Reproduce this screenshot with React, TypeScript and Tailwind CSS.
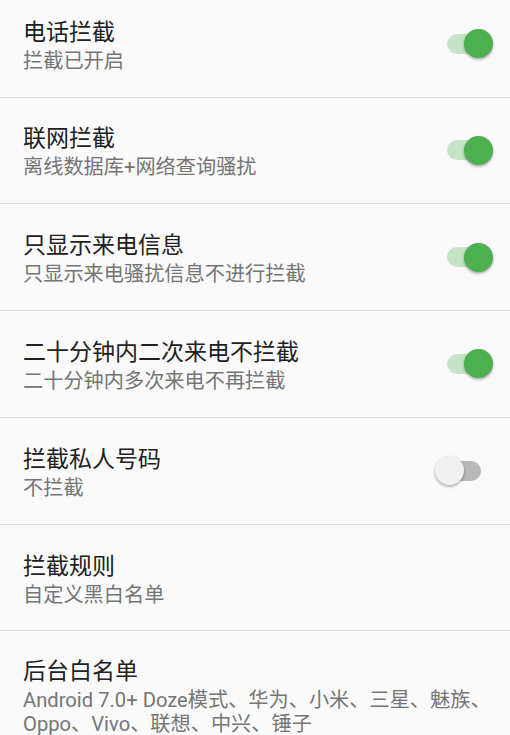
import React from "react";

type Item = { title: string; sub: React.ReactNode; toggle?: boolean };

const items: Item[] = [
  { title: "电话拦截", sub: "拦截已开启", toggle: true },
  { title: "联网拦截", sub: "离线数据库+网络查询骚扰", toggle: true },
  { title: "只显示来电信息", sub: "只显示来电骚扰信息不进行拦截", toggle: true },
  { title: "二十分钟内二次来电不拦截", sub: "二十分钟内多次来电不再拦截", toggle: true },
  { title: "拦截私人号码", sub: "不拦截", toggle: false },
  { title: "拦截规则", sub: "自定义黑白名单" },
  {
    title: "后台白名单",
    sub: (
      <>
        Android 7.0+ Doze模式、华为、小米、三星、魅族、
        <br />
        Oppo、Vivo、联想、中兴、锤子
      </>
    ),
  },
];

function Switch({ on }: { on: boolean }) {
  return (
    <div className="relative w-[58px] h-[29px] shrink-0">
      <div
        className={
          "absolute left-[12.5px] top-[4.5px] w-[34px] h-[20px] rounded-full " +
          (on ? "bg-[#c5e4c6]" : "bg-[#b9b9b9]")
        }
      />
      <div
        className={
          "absolute top-0 w-[29px] h-[29px] rounded-full shadow-[0_1.5px_3px_rgba(0,0,0,0.35)] " +
          (on ? "left-[29px] bg-[#4caf50]" : "left-0 bg-[#f1f1f1]")
        }
      />
    </div>
  );
}

export default function App() {
  return (
    <div
      className="w-[510px] h-[735px] overflow-hidden bg-[#fafafa]"
      style={{ fontFamily: 'Roboto, "Noto Sans CJK SC", sans-serif' }}
    >
      <div className="mt-[-9.3px] flex flex-col">
        {items.map((it, i) => (
          <div
            key={i}
            className={
              "flex items-center min-h-[106.8px] pl-[23px] pr-[17.5px] py-[23px] " +
              (i < items.length - 1 ? "border-b border-[#dedede]" : "")
            }
          >
            <div className="flex-1 flex flex-col mt-[1px] whitespace-nowrap">
              <div className="text-[23px] leading-[33px] text-[#212121]">{it.title}</div>
              <div className="text-[20.2px] leading-[24px] text-[#757575]">{it.sub}</div>
            </div>
            {it.toggle !== undefined && <Switch on={it.toggle} />}
          </div>
        ))}
      </div>
    </div>
  );
}
